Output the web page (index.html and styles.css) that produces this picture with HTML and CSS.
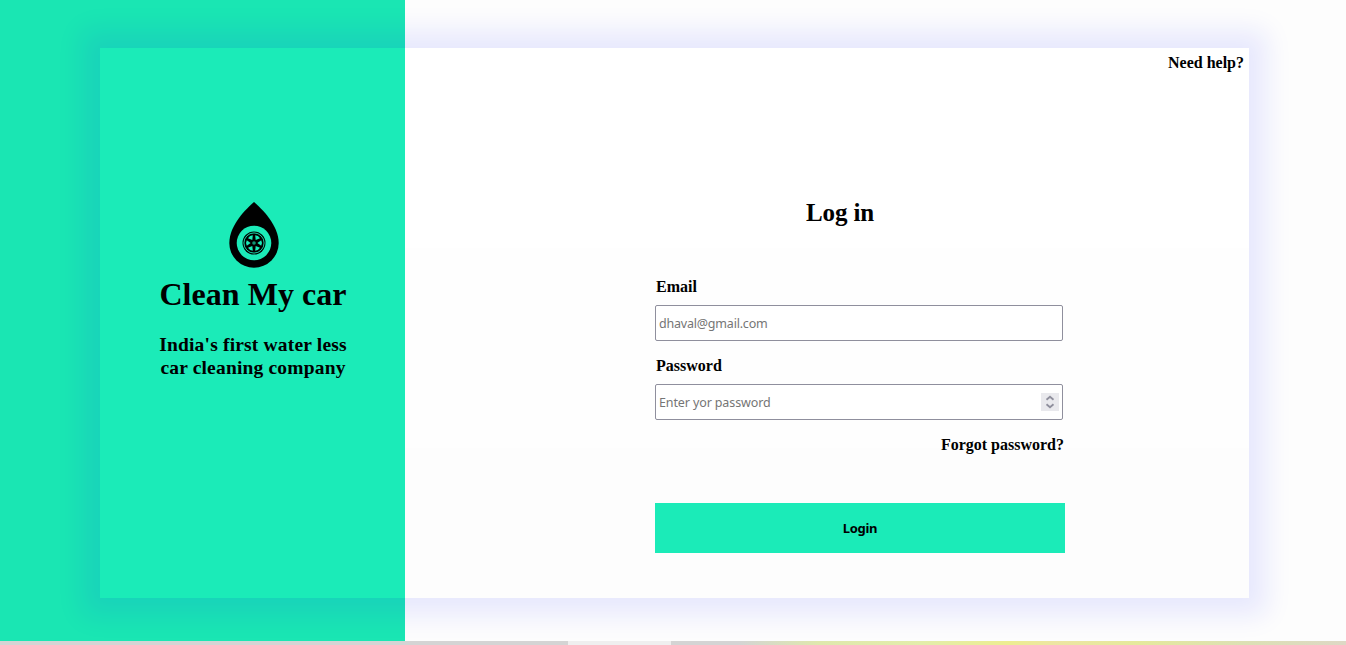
FILE: index.html
```html
<!DOCTYPE html>
<html lang="en">
<head>
<meta charset="utf-8">
<title>Clean My car</title>
<link rel="stylesheet" href="styles.css">
</head>
<body>
<div class="page">
<main class="card">
  <section class="brand">
    <svg class="logo" viewBox="0 0 50 66" width="50" height="66">
      <path d="M25 0C18 6 .3 23 .3 41a24.7 24.7 0 0 0 49.4 0C49.7 23 32 6 25 0Z"/>
      <circle class="mint" cx="25" cy="41" r="17.3"/>
      <circle cx="25" cy="41" r="11.5"/>
      <circle class="ring" cx="25" cy="41" r="10.1"/>
      <g class="mint" transform="rotate(30 25 41)">
        <path id="gap" d="M22.2 33.8Q25 32.2 27.8 33.8L25 37.6Z"/>
        <use href="#gap" transform="rotate(60 25 41)"/>
        <use href="#gap" transform="rotate(120 25 41)"/>
        <use href="#gap" transform="rotate(180 25 41)"/>
        <use href="#gap" transform="rotate(240 25 41)"/>
        <use href="#gap" transform="rotate(300 25 41)"/>
      </g>
      <circle class="hub" cx="25" cy="41" r="1.8"/>
    </svg>
    <h1 class="name">Clean My car</h1>
    <p class="tagline">India's first water less<br>car cleaning company</p>
  </section>
  <section class="content">
    <a class="help">Need help?</a>
    <h2 class="title">Log in</h2>
    <form class="form">
      <label class="label" for="email">Email</label>
      <input class="input" id="email" type="email" placeholder="dhaval@gmail.com">
      <label class="label" for="password">Password</label>
      <div class="input field">
        <input class="bare" id="password" placeholder="Enter yor password">
        <svg class="spinner" viewBox="0 0 18 18" width="18" height="18"><path d="M5.5 6.8 9 3.8l3.5 3M5.5 11.2l3.5 3 3.5-3"/></svg>
      </div>
      <a class="forgot">Forgot password?</a>
      <button class="submit" type="button">Login</button>
    </form>
  </section>
</main>
</div>
<footer class="strip"><div class="strip-left"></div><div class="strip-tab"></div><div class="strip-right"></div></footer>
</body>
</html>
```
FILE: styles.css
```css
* { box-sizing: border-box; }
body { margin: 0; font-family: "Liberation Serif", "Times New Roman", serif; color: #000; height: 645px; overflow: hidden; }
h1, h2, p { margin: 0; font-weight: bold; }
.page { height: 641px; padding: 48px 97px 43px 100px; overflow: hidden; background: linear-gradient(90deg, #1ae6b3 405px, #fdfdfd 405px); }
.card { display: flex; width: 1149px; height: 550px; box-shadow: 0 0 25px 17px rgba(26, 30, 252, 0.095); }
.brand { width: 305px; display: flex; flex-direction: column; align-items: center; padding-top: 154px; background: #1bebb8; text-align: center; }
.logo { display: block; flex: none; margin-left: 2px; }
.mint { fill: #1bebb8; }
.ring { fill: none; stroke: #1bebb8; stroke-width: 0.9; }
.hub { fill: #0f9473; }
.name { margin: 8px 0 0 1px; font-size: 32px; line-height: 36px; letter-spacing: 0.05px; }
.tagline { margin: 21px 0 0 1px; font-size: 19.5px; line-height: 23px; letter-spacing: 0.18px; }
.content { flex: 1; display: flex; flex-direction: column; background: linear-gradient(#fff 200px, #fefefe 200px 400px, #fdfdfd 400px); }
.help { align-self: flex-end; margin: 6px 5px 0 0; font-size: 16px; line-height: 18px; font-weight: bold; }
.title { margin: 127px 0 0 401px; font-size: 25px; line-height: 28px; letter-spacing: -0.1px; }
.form { display: flex; flex-direction: column; width: 410px; margin: 50px 0 0 250px; }
.label { height: 28px; padding-left: 1px; font-size: 16px; line-height: 20px; font-weight: bold; }
.input { width: 408px; height: 36px; margin-bottom: 15px; padding: 0 3px; border: 1px solid #8f8f9d; border-radius: 2px; background: #fff; font: 12.5px "Noto Sans", sans-serif; letter-spacing: -0.2px; outline: none; }
.field { display: flex; align-items: center; }
.bare { flex: 1; padding: 0; border: 0; background: none; font: inherit; letter-spacing: -0.12px; outline: none; }
.input::placeholder, .bare::placeholder { color: #757575; opacity: 1; }
.spinner { background: #e9e9ed; fill: none; stroke: #8f8f9d; stroke-width: 1.8; }
.forgot { align-self: flex-end; margin-right: 1px; font-size: 16px; line-height: 20px; font-weight: bold; }
.submit { height: 50px; margin-top: 48px; padding: 0; border: 0; background: #1bebb8; color: #000; font: bold 13px "Noto Sans", sans-serif; letter-spacing: -0.3px; }
.strip { display: flex; height: 4px; }
.strip-left { width: 568px; background: #d4d4d4; }
.strip-tab { width: 103px; background: #efefef; }
.strip-right { flex: 1; background: linear-gradient(90deg, #d4d4d4 10%, #dfe8ad 22%, #e3edab 37%, #eded91 50%, #ede5a3 57%, #e5e99c 69%, #dce0b4 85%, #ded8c5); }
```
